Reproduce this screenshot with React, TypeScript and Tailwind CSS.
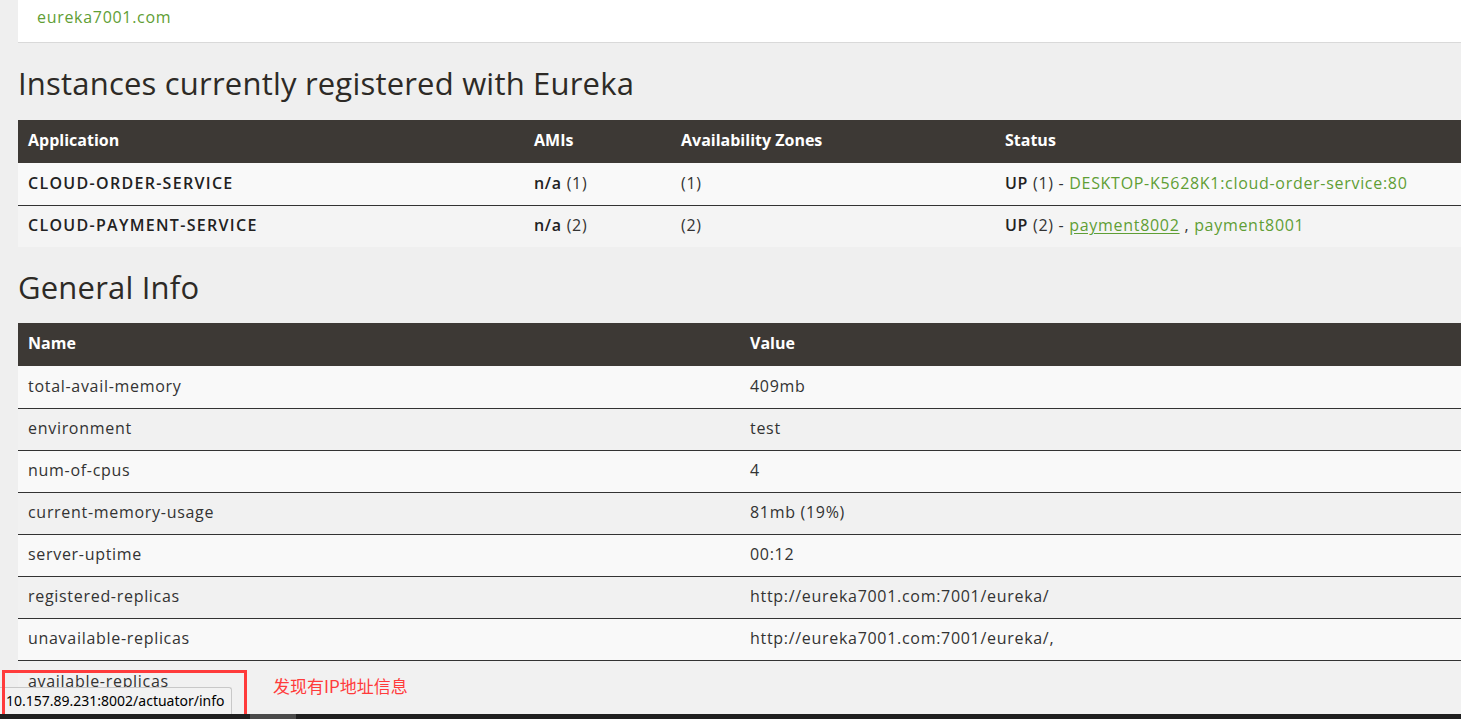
import React from "react";

type Instance = {
  app: string;
  amis: string;
  zones: string;
  count: string;
  links: { label: string; underline?: boolean }[];
};

const instances: Instance[] = [
  {
    app: "CLOUD-ORDER-SERVICE",
    amis: "(1)",
    zones: "(1)",
    count: "(1)",
    links: [{ label: "DESKTOP-K5628K1:cloud-order-service:80" }],
  },
  {
    app: "CLOUD-PAYMENT-SERVICE",
    amis: "(2)",
    zones: "(2)",
    count: "(2)",
    links: [{ label: "payment8002", underline: true }, { label: "payment8001" }],
  },
];

const info: [string, string][] = [
  ["total-avail-memory", "409mb"],
  ["environment", "test"],
  ["num-of-cpus", "4"],
  ["current-memory-usage", "81mb (19%)"],
  ["server-uptime", "00:12"],
  ["registered-replicas", "http://eureka7001.com:7001/eureka/"],
  ["unavailable-replicas", "http://eureka7001.com:7001/eureka/,"],
  ["available-replicas", ""],
];

const font = { fontFamily: '"Open Sans", "Noto Sans", sans-serif' };

export default function App() {
  return (
    <div className="relative h-[719px] w-[1461px] overflow-hidden bg-[#efefef] text-[#333]" style={font}>
      <div className="pl-[18px] w-[1600px]">
        {/* top box */}
        <div className="h-[43px] bg-white border-b border-[#d9d9d9] pl-[19px] pt-[5px]">
          <span className="text-[16px] tracking-[0.7px] text-[#5f9e35]">eureka7001.com</span>
        </div>

        {/* Instances */}
        <h1 className="text-[31px] tracking-[0.2px] leading-[40px] mt-[20px] mb-[17px] text-[#2d2a26]">
          Instances currently registered with Eureka
        </h1>
        <table className="w-[1500px] border-collapse text-[16px] tracking-[0.7px] table-fixed">
          <colgroup>
            <col className="w-[506px]" />
            <col className="w-[147px]" />
            <col className="w-[324px]" />
            <col />
          </colgroup>
          <thead>
            <tr className="bg-[#3d3935] text-white h-[43px] tracking-normal">
              <th className="text-left font-bold pl-[10px] pb-[4px]">Application</th>
              <th className="text-left font-bold pl-[10px] pb-[4px]">AMIs</th>
              <th className="text-left font-bold pl-[10px] pb-[4px]">Availability Zones</th>
              <th className="text-left font-bold pl-[10px] pb-[4px]">Status</th>
            </tr>
          </thead>
          <tbody>
            {instances.map((row, i) => (
              <tr
                key={row.app}
                className={`h-[42px] ${i === 0 ? "bg-[#f9f9f9] border-b border-[#333]" : "bg-[#f4f4f4]"}`}
              >
                <td className="pl-[10px] pb-[2px] font-semibold tracking-[1.3px] text-[#222]">{row.app}</td>
                <td className="pl-[10px] pb-[2px]">
                  <b className="font-semibold text-[#222]">n/a</b> {row.amis}
                </td>
                <td className="pl-[10px] pb-[2px]">{row.zones}</td>
                <td className="pl-[10px] pb-[2px]">
                  <b className="font-semibold text-[#222]">UP</b> {row.count} -{" "}
                  {row.links.map((l, j) => (
                    <span key={l.label}>
                      {j > 0 && " , "}
                      <a className={`text-[#5f9e35] ${l.underline ? "underline underline-offset-2" : ""}`}>
                        {l.label}
                      </a>
                    </span>
                  ))}
                </td>
              </tr>
            ))}
          </tbody>
        </table>

        {/* General Info */}
        <h1 className="text-[31px] tracking-[0.2px] leading-[40px] mt-[20px] mb-[16px] text-[#2d2a26]">
          General Info
        </h1>
        <table className="w-[1500px] border-collapse text-[16px] tracking-[0.7px] table-fixed">
          <colgroup>
            <col className="w-[722px]" />
            <col />
          </colgroup>
          <thead>
            <tr className="bg-[#3d3935] text-white h-[43px] tracking-normal">
              <th className="text-left font-bold pl-[10px] pb-[4px]">Name</th>
              <th className="text-left font-bold pl-[10px] pb-[4px]">Value</th>
            </tr>
          </thead>
          <tbody>
            {info.map(([name, value], i) => {
              const last = i === info.length - 1;
              return (
                <tr
                  key={name}
                  className={`${last ? "h-[60px] align-top" : "h-[42px] border-b border-[#333]"} ${
                    i % 2 === 0 ? "bg-[#f9f9f9]" : "bg-[#f1f1f1]"
                  }`}
                >
                  <td className={`pl-[10px] pb-[2px] ${last ? "pt-[8px]" : ""}`}>{name}</td>
                  <td className="pl-[10px] pb-[2px]">{value}</td>
                </tr>
              );
            })}
          </tbody>
        </table>
      </div>

      {/* browser status bar */}
      <div
        className="absolute left-0 bottom-[5px] h-[27px] w-[232px] bg-[#f2f2f2] border-t border-r border-[#c8c8c8] rounded-tr-[3px] pl-[6px] text-[14px] leading-[26px] text-black"
        style={{ fontFamily: '"Noto Sans", "DejaVu Sans", sans-serif' }}
      >
        10.157.89.231:8002/actuator/info
      </div>

      {/* annotation */}
      <div className="absolute left-[2px] top-[670px] w-[245px] h-[47px] border-[3px] border-[#ff3b3b]" />
      <div
        className="absolute left-[273px] top-[673px] text-[17px] text-[#ff3b3b]"
        style={{ fontFamily: '"Noto Sans CJK SC", sans-serif' }}
      >
        发现有IP地址信息
      </div>

      {/* bottom scrollbar strip */}
      <div className="absolute left-0 right-0 bottom-0 h-[5px] bg-[#1f1f1f]">
        <div className="ml-[250px] w-[46px] h-full bg-[#4a4a4a]" />
      </div>
    </div>
  );
}
